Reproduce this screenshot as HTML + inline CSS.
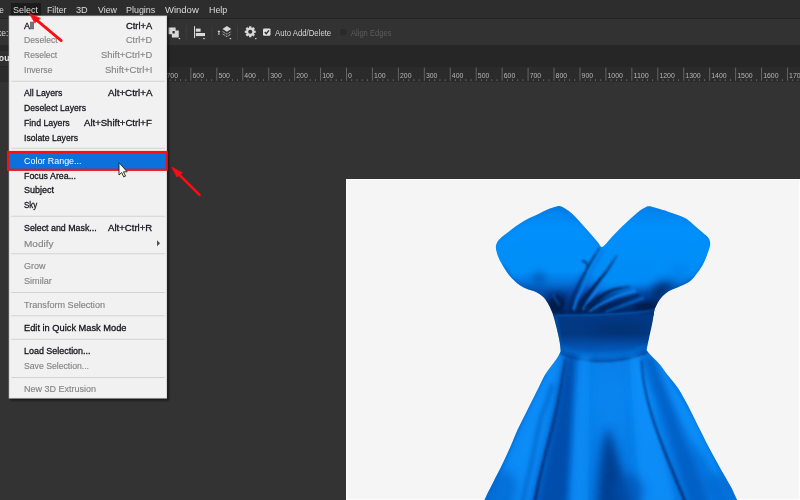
<!DOCTYPE html>
<html><head><meta charset="utf-8"><title>Select menu</title>
<style>
html,body{margin:0;padding:0;}
body{width:800px;height:500px;overflow:hidden;position:relative;background:#333333;font-family:"Liberation Sans",sans-serif;font-size:9px;}
.t{position:absolute;white-space:nowrap;line-height:12px;height:12px;font-size:9.5px;transform-origin:0 50%;}
.en{color:#14141a;-webkit-text-stroke:0.3px #14141a;}
.dis{color:#858585;-webkit-text-stroke:0.15px #858585;}
.hl{color:#ffffff;}
.mb{color:#dcdcdc;}
.tb{color:#d6d6d6;}
.tbd{color:#5c5c5c;}
#menubar{position:absolute;left:0;top:0;width:800px;height:18px;background:#2d2d2d;}
#mbline{position:absolute;left:0;top:18px;width:800px;height:1px;background:#232323;}
#optbar{position:absolute;left:0;top:19px;width:800px;height:26px;background:#323232;}
#tabbar{position:absolute;left:0;top:45px;width:800px;height:22px;background:#262626;}
#ruler{position:absolute;left:0;top:67px;width:800px;height:15px;background:#2b2b2b;}
#tab{position:absolute;left:0;top:50.5px;width:120px;height:15.5px;background:#303030;}
#selbtn{position:absolute;left:10.6px;top:2.5px;width:30px;height:13.5px;background:#1b1b1b;}
#canvas{position:absolute;left:346px;top:179px;width:454px;height:321px;background:#f5f5f5;box-shadow:0 0 1px 0.5px rgba(0,0,0,0.35), inset 0 0 0 1px #fdfdfd;}
</style></head><body>
<div id="menubar"></div><div id="mbline"></div><div id="optbar"></div><div id="tabbar"></div><div id="ruler"></div><div id="tab"></div><div id="selbtn"></div>

<div id="chrome">
<span class="t mb" style="left:-14.50px;top:3.61px;transform:scaleX(0.8734)">Type</span>
<span class="t mb" style="left:13.00px;top:3.61px;transform:scaleX(0.9467)">Select</span>
<span class="t mb" style="left:47.00px;top:3.61px;transform:scaleX(0.9231)">Filter</span>
<span class="t mb" style="left:76.25px;top:3.61px;transform:scaleX(0.9666)">3D</span>
<span class="t mb" style="left:97.50px;top:3.61px;transform:scaleX(0.9304)">View</span>
<span class="t mb" style="left:126.25px;top:3.61px;transform:scaleX(0.9383)">Plugins</span>
<span class="t mb" style="left:165.00px;top:3.61px;transform:scaleX(0.9986)">Window</span>
<span class="t mb" style="left:208.75px;top:3.61px;transform:scaleX(0.9337)">Help</span>
<span class="t tb" style="left:-19.00px;top:26.60px;font-size:8.6px;transform:scaleX(1.0089)">Stroke:</span>
<span class="t tb" style="left:274.50px;top:26.60px;font-size:8.6px;transform:scaleX(0.9048)">Auto Add/Delete</span>
<span class="t tbd" style="left:350.60px;top:26.60px;font-size:8.6px;transform:scaleX(0.8802)">Align Edges</span>
<svg id="chromesvg" width="800" height="90" viewBox="0 0 800 90" style="position:absolute;left:0;top:0;overflow:visible">
<rect x="185.75" y="25.5" width="1" height="15" fill="#3d3d3d"/>
<rect x="211.4" y="25.5" width="1" height="15" fill="#3d3d3d"/>
<rect x="237.0" y="25.5" width="1" height="15" fill="#3d3d3d"/>
<path fill="#d9d9d9" fill-rule="evenodd" d="M168.5 27.4h7.1v3.1h3.15v6.9h-6.85v-3.15h-3.4z M172.5 31.1h2.25v2.5h-2.25z"/>
<path fill="#d9d9d9" d="M178.3 38h2.2l-1.1 1.4z"/>
<rect x="194" y="26.1" width="1" height="12" fill="#d9d9d9"/>
<rect x="195.8" y="28.6" width="4.8" height="3.1" fill="#d9d9d9"/>
<rect x="195.8" y="33" width="9.2" height="3.1" fill="#d9d9d9"/>
<path fill="#d9d9d9" d="M202.9 38h2.2l-1.1 1.4z"/>
<path fill="#d9d9d9" d="M218.9 30.3l1.5 1.8h-1v2.8h-1v-2.8h-1z"/>
<path fill="#d9d9d9" d="M226.9 26l4.4 2.9l-4.4 2.9l-4.4-2.9z"/>
<path fill="none" stroke="#d9d9d9" stroke-width="0.9" d="M222.7 31.6l4.2 2.6l4.2-2.6 M222.7 34l4.2 2.6l4.2-2.6" stroke-dasharray="1.2 0.7"/>
<path fill="#d9d9d9" d="M229.3 38h2.2l-1.1 1.4z"/>
<path fill="#d9d9d9" fill-rule="evenodd" d="M255.74 30.64 L255.74 32.86 L254.14 33.04 L253.91 33.59 L254.92 34.84 L253.34 36.42 L252.09 35.41 L251.54 35.64 L251.36 37.24 L249.14 37.24 L248.96 35.64 L248.41 35.41 L247.16 36.42 L245.58 34.84 L246.59 33.59 L246.36 33.04 L244.76 32.86 L244.76 30.64 L246.36 30.46 L246.59 29.91 L245.58 28.66 L247.16 27.08 L248.41 28.09 L248.96 27.86 L249.14 26.26 L251.36 26.26 L251.54 27.86 L252.09 28.09 L253.34 27.08 L254.92 28.66 L253.91 29.91 L254.14 30.46Z M248.15 31.75a2.1 2.1 0 1 0 4.2 0a2.1 2.1 0 1 0 -4.2 0z"/>
<path fill="#d9d9d9" d="M254.7 38h2.2l-1.1 1.4z"/>
<rect x="263" y="28.4" width="7.5" height="7.4" rx="1.2" fill="#dedede"/>
<path fill="none" stroke="#2a2a2a" stroke-width="1.3" d="M264.7 32l1.6 1.7l2.7-3.4"/>
<rect x="340.4" y="28.9" width="6" height="6.4" rx="1" fill="#292929"/>
<rect x="138.48" y="67.7" width="1" height="13" fill="#646464"/>
<rect x="143.77" y="79.2" width="0.9" height="1.8" fill="#686868"/>
<rect x="148.96" y="79.2" width="0.9" height="1.8" fill="#686868"/>
<rect x="154.14" y="79.2" width="0.9" height="1.8" fill="#686868"/>
<rect x="159.33" y="79.2" width="0.9" height="1.8" fill="#686868"/>
<text x="140.58" y="78" font-size="8" fill="#b8b8b8" opacity="0.99" textLength="11.55" lengthAdjust="spacingAndGlyphs" font-family="Liberation Sans, sans-serif">800</text>
<rect x="164.42" y="67.7" width="1" height="13" fill="#646464"/>
<rect x="169.71" y="79.2" width="0.9" height="1.8" fill="#686868"/>
<rect x="174.90" y="79.2" width="0.9" height="1.8" fill="#686868"/>
<rect x="180.08" y="79.2" width="0.9" height="1.8" fill="#686868"/>
<rect x="185.27" y="79.2" width="0.9" height="1.8" fill="#686868"/>
<text x="166.52" y="78" font-size="8" fill="#b8b8b8" opacity="0.99" textLength="11.55" lengthAdjust="spacingAndGlyphs" font-family="Liberation Sans, sans-serif">700</text>
<rect x="190.36" y="67.7" width="1" height="13" fill="#646464"/>
<rect x="195.65" y="79.2" width="0.9" height="1.8" fill="#686868"/>
<rect x="200.84" y="79.2" width="0.9" height="1.8" fill="#686868"/>
<rect x="206.02" y="79.2" width="0.9" height="1.8" fill="#686868"/>
<rect x="211.21" y="79.2" width="0.9" height="1.8" fill="#686868"/>
<text x="192.46" y="78" font-size="8" fill="#b8b8b8" opacity="0.99" textLength="11.55" lengthAdjust="spacingAndGlyphs" font-family="Liberation Sans, sans-serif">600</text>
<rect x="216.30" y="67.7" width="1" height="13" fill="#646464"/>
<rect x="221.59" y="79.2" width="0.9" height="1.8" fill="#686868"/>
<rect x="226.78" y="79.2" width="0.9" height="1.8" fill="#686868"/>
<rect x="231.96" y="79.2" width="0.9" height="1.8" fill="#686868"/>
<rect x="237.15" y="79.2" width="0.9" height="1.8" fill="#686868"/>
<text x="218.40" y="78" font-size="8" fill="#b8b8b8" opacity="0.99" textLength="11.55" lengthAdjust="spacingAndGlyphs" font-family="Liberation Sans, sans-serif">500</text>
<rect x="242.24" y="67.7" width="1" height="13" fill="#646464"/>
<rect x="247.53" y="79.2" width="0.9" height="1.8" fill="#686868"/>
<rect x="252.72" y="79.2" width="0.9" height="1.8" fill="#686868"/>
<rect x="257.90" y="79.2" width="0.9" height="1.8" fill="#686868"/>
<rect x="263.09" y="79.2" width="0.9" height="1.8" fill="#686868"/>
<text x="244.34" y="78" font-size="8" fill="#b8b8b8" opacity="0.99" textLength="11.55" lengthAdjust="spacingAndGlyphs" font-family="Liberation Sans, sans-serif">400</text>
<rect x="268.18" y="67.7" width="1" height="13" fill="#646464"/>
<rect x="273.47" y="79.2" width="0.9" height="1.8" fill="#686868"/>
<rect x="278.66" y="79.2" width="0.9" height="1.8" fill="#686868"/>
<rect x="283.84" y="79.2" width="0.9" height="1.8" fill="#686868"/>
<rect x="289.03" y="79.2" width="0.9" height="1.8" fill="#686868"/>
<text x="270.28" y="78" font-size="8" fill="#b8b8b8" opacity="0.99" textLength="11.55" lengthAdjust="spacingAndGlyphs" font-family="Liberation Sans, sans-serif">300</text>
<rect x="294.12" y="67.7" width="1" height="13" fill="#646464"/>
<rect x="299.41" y="79.2" width="0.9" height="1.8" fill="#686868"/>
<rect x="304.60" y="79.2" width="0.9" height="1.8" fill="#686868"/>
<rect x="309.78" y="79.2" width="0.9" height="1.8" fill="#686868"/>
<rect x="314.97" y="79.2" width="0.9" height="1.8" fill="#686868"/>
<text x="296.22" y="78" font-size="8" fill="#b8b8b8" opacity="0.99" textLength="11.55" lengthAdjust="spacingAndGlyphs" font-family="Liberation Sans, sans-serif">200</text>
<rect x="320.06" y="67.7" width="1" height="13" fill="#646464"/>
<rect x="325.35" y="79.2" width="0.9" height="1.8" fill="#686868"/>
<rect x="330.54" y="79.2" width="0.9" height="1.8" fill="#686868"/>
<rect x="335.72" y="79.2" width="0.9" height="1.8" fill="#686868"/>
<rect x="340.91" y="79.2" width="0.9" height="1.8" fill="#686868"/>
<text x="322.16" y="78" font-size="8" fill="#b8b8b8" opacity="0.99" textLength="11.55" lengthAdjust="spacingAndGlyphs" font-family="Liberation Sans, sans-serif">100</text>
<rect x="346.00" y="67.7" width="1" height="13" fill="#646464"/>
<rect x="351.29" y="79.2" width="0.9" height="1.8" fill="#686868"/>
<rect x="356.48" y="79.2" width="0.9" height="1.8" fill="#686868"/>
<rect x="361.66" y="79.2" width="0.9" height="1.8" fill="#686868"/>
<rect x="366.85" y="79.2" width="0.9" height="1.8" fill="#686868"/>
<text x="348.10" y="78" font-size="8" fill="#b8b8b8" opacity="0.99" textLength="3.85" lengthAdjust="spacingAndGlyphs" font-family="Liberation Sans, sans-serif">0</text>
<rect x="371.94" y="67.7" width="1" height="13" fill="#646464"/>
<rect x="377.23" y="79.2" width="0.9" height="1.8" fill="#686868"/>
<rect x="382.42" y="79.2" width="0.9" height="1.8" fill="#686868"/>
<rect x="387.60" y="79.2" width="0.9" height="1.8" fill="#686868"/>
<rect x="392.79" y="79.2" width="0.9" height="1.8" fill="#686868"/>
<text x="374.04" y="78" font-size="8" fill="#b8b8b8" opacity="0.99" textLength="11.55" lengthAdjust="spacingAndGlyphs" font-family="Liberation Sans, sans-serif">100</text>
<rect x="397.88" y="67.7" width="1" height="13" fill="#646464"/>
<rect x="403.17" y="79.2" width="0.9" height="1.8" fill="#686868"/>
<rect x="408.36" y="79.2" width="0.9" height="1.8" fill="#686868"/>
<rect x="413.54" y="79.2" width="0.9" height="1.8" fill="#686868"/>
<rect x="418.73" y="79.2" width="0.9" height="1.8" fill="#686868"/>
<text x="399.98" y="78" font-size="8" fill="#b8b8b8" opacity="0.99" textLength="11.55" lengthAdjust="spacingAndGlyphs" font-family="Liberation Sans, sans-serif">200</text>
<rect x="423.82" y="67.7" width="1" height="13" fill="#646464"/>
<rect x="429.11" y="79.2" width="0.9" height="1.8" fill="#686868"/>
<rect x="434.30" y="79.2" width="0.9" height="1.8" fill="#686868"/>
<rect x="439.48" y="79.2" width="0.9" height="1.8" fill="#686868"/>
<rect x="444.67" y="79.2" width="0.9" height="1.8" fill="#686868"/>
<text x="425.92" y="78" font-size="8" fill="#b8b8b8" opacity="0.99" textLength="11.55" lengthAdjust="spacingAndGlyphs" font-family="Liberation Sans, sans-serif">300</text>
<rect x="449.76" y="67.7" width="1" height="13" fill="#646464"/>
<rect x="455.05" y="79.2" width="0.9" height="1.8" fill="#686868"/>
<rect x="460.24" y="79.2" width="0.9" height="1.8" fill="#686868"/>
<rect x="465.42" y="79.2" width="0.9" height="1.8" fill="#686868"/>
<rect x="470.61" y="79.2" width="0.9" height="1.8" fill="#686868"/>
<text x="451.86" y="78" font-size="8" fill="#b8b8b8" opacity="0.99" textLength="11.55" lengthAdjust="spacingAndGlyphs" font-family="Liberation Sans, sans-serif">400</text>
<rect x="475.70" y="67.7" width="1" height="13" fill="#646464"/>
<rect x="480.99" y="79.2" width="0.9" height="1.8" fill="#686868"/>
<rect x="486.18" y="79.2" width="0.9" height="1.8" fill="#686868"/>
<rect x="491.36" y="79.2" width="0.9" height="1.8" fill="#686868"/>
<rect x="496.55" y="79.2" width="0.9" height="1.8" fill="#686868"/>
<text x="477.80" y="78" font-size="8" fill="#b8b8b8" opacity="0.99" textLength="11.55" lengthAdjust="spacingAndGlyphs" font-family="Liberation Sans, sans-serif">500</text>
<rect x="501.64" y="67.7" width="1" height="13" fill="#646464"/>
<rect x="506.93" y="79.2" width="0.9" height="1.8" fill="#686868"/>
<rect x="512.12" y="79.2" width="0.9" height="1.8" fill="#686868"/>
<rect x="517.30" y="79.2" width="0.9" height="1.8" fill="#686868"/>
<rect x="522.49" y="79.2" width="0.9" height="1.8" fill="#686868"/>
<text x="503.74" y="78" font-size="8" fill="#b8b8b8" opacity="0.99" textLength="11.55" lengthAdjust="spacingAndGlyphs" font-family="Liberation Sans, sans-serif">600</text>
<rect x="527.58" y="67.7" width="1" height="13" fill="#646464"/>
<rect x="532.87" y="79.2" width="0.9" height="1.8" fill="#686868"/>
<rect x="538.06" y="79.2" width="0.9" height="1.8" fill="#686868"/>
<rect x="543.24" y="79.2" width="0.9" height="1.8" fill="#686868"/>
<rect x="548.43" y="79.2" width="0.9" height="1.8" fill="#686868"/>
<text x="529.68" y="78" font-size="8" fill="#b8b8b8" opacity="0.99" textLength="11.55" lengthAdjust="spacingAndGlyphs" font-family="Liberation Sans, sans-serif">700</text>
<rect x="553.52" y="67.7" width="1" height="13" fill="#646464"/>
<rect x="558.81" y="79.2" width="0.9" height="1.8" fill="#686868"/>
<rect x="564.00" y="79.2" width="0.9" height="1.8" fill="#686868"/>
<rect x="569.18" y="79.2" width="0.9" height="1.8" fill="#686868"/>
<rect x="574.37" y="79.2" width="0.9" height="1.8" fill="#686868"/>
<text x="555.62" y="78" font-size="8" fill="#b8b8b8" opacity="0.99" textLength="11.55" lengthAdjust="spacingAndGlyphs" font-family="Liberation Sans, sans-serif">800</text>
<rect x="579.46" y="67.7" width="1" height="13" fill="#646464"/>
<rect x="584.75" y="79.2" width="0.9" height="1.8" fill="#686868"/>
<rect x="589.94" y="79.2" width="0.9" height="1.8" fill="#686868"/>
<rect x="595.12" y="79.2" width="0.9" height="1.8" fill="#686868"/>
<rect x="600.31" y="79.2" width="0.9" height="1.8" fill="#686868"/>
<text x="581.56" y="78" font-size="8" fill="#b8b8b8" opacity="0.99" textLength="11.55" lengthAdjust="spacingAndGlyphs" font-family="Liberation Sans, sans-serif">900</text>
<rect x="605.40" y="67.7" width="1" height="13" fill="#646464"/>
<rect x="610.69" y="79.2" width="0.9" height="1.8" fill="#686868"/>
<rect x="615.88" y="79.2" width="0.9" height="1.8" fill="#686868"/>
<rect x="621.06" y="79.2" width="0.9" height="1.8" fill="#686868"/>
<rect x="626.25" y="79.2" width="0.9" height="1.8" fill="#686868"/>
<text x="607.50" y="78" font-size="8" fill="#b8b8b8" opacity="0.99" textLength="15.40" lengthAdjust="spacingAndGlyphs" font-family="Liberation Sans, sans-serif">1000</text>
<rect x="631.34" y="67.7" width="1" height="13" fill="#646464"/>
<rect x="636.63" y="79.2" width="0.9" height="1.8" fill="#686868"/>
<rect x="641.82" y="79.2" width="0.9" height="1.8" fill="#686868"/>
<rect x="647.00" y="79.2" width="0.9" height="1.8" fill="#686868"/>
<rect x="652.19" y="79.2" width="0.9" height="1.8" fill="#686868"/>
<text x="633.44" y="78" font-size="8" fill="#b8b8b8" opacity="0.99" textLength="15.40" lengthAdjust="spacingAndGlyphs" font-family="Liberation Sans, sans-serif">1100</text>
<rect x="657.28" y="67.7" width="1" height="13" fill="#646464"/>
<rect x="662.57" y="79.2" width="0.9" height="1.8" fill="#686868"/>
<rect x="667.76" y="79.2" width="0.9" height="1.8" fill="#686868"/>
<rect x="672.94" y="79.2" width="0.9" height="1.8" fill="#686868"/>
<rect x="678.13" y="79.2" width="0.9" height="1.8" fill="#686868"/>
<text x="659.38" y="78" font-size="8" fill="#b8b8b8" opacity="0.99" textLength="15.40" lengthAdjust="spacingAndGlyphs" font-family="Liberation Sans, sans-serif">1200</text>
<rect x="683.22" y="67.7" width="1" height="13" fill="#646464"/>
<rect x="688.51" y="79.2" width="0.9" height="1.8" fill="#686868"/>
<rect x="693.70" y="79.2" width="0.9" height="1.8" fill="#686868"/>
<rect x="698.88" y="79.2" width="0.9" height="1.8" fill="#686868"/>
<rect x="704.07" y="79.2" width="0.9" height="1.8" fill="#686868"/>
<text x="685.32" y="78" font-size="8" fill="#b8b8b8" opacity="0.99" textLength="15.40" lengthAdjust="spacingAndGlyphs" font-family="Liberation Sans, sans-serif">1300</text>
<rect x="709.16" y="67.7" width="1" height="13" fill="#646464"/>
<rect x="714.45" y="79.2" width="0.9" height="1.8" fill="#686868"/>
<rect x="719.64" y="79.2" width="0.9" height="1.8" fill="#686868"/>
<rect x="724.82" y="79.2" width="0.9" height="1.8" fill="#686868"/>
<rect x="730.01" y="79.2" width="0.9" height="1.8" fill="#686868"/>
<text x="711.26" y="78" font-size="8" fill="#b8b8b8" opacity="0.99" textLength="15.40" lengthAdjust="spacingAndGlyphs" font-family="Liberation Sans, sans-serif">1400</text>
<rect x="735.10" y="67.7" width="1" height="13" fill="#646464"/>
<rect x="740.39" y="79.2" width="0.9" height="1.8" fill="#686868"/>
<rect x="745.58" y="79.2" width="0.9" height="1.8" fill="#686868"/>
<rect x="750.76" y="79.2" width="0.9" height="1.8" fill="#686868"/>
<rect x="755.95" y="79.2" width="0.9" height="1.8" fill="#686868"/>
<text x="737.20" y="78" font-size="8" fill="#b8b8b8" opacity="0.99" textLength="15.40" lengthAdjust="spacingAndGlyphs" font-family="Liberation Sans, sans-serif">1500</text>
<rect x="761.04" y="67.7" width="1" height="13" fill="#646464"/>
<rect x="766.33" y="79.2" width="0.9" height="1.8" fill="#686868"/>
<rect x="771.52" y="79.2" width="0.9" height="1.8" fill="#686868"/>
<rect x="776.70" y="79.2" width="0.9" height="1.8" fill="#686868"/>
<rect x="781.89" y="79.2" width="0.9" height="1.8" fill="#686868"/>
<text x="763.14" y="78" font-size="8" fill="#b8b8b8" opacity="0.99" textLength="15.40" lengthAdjust="spacingAndGlyphs" font-family="Liberation Sans, sans-serif">1600</text>
<rect x="786.98" y="67.7" width="1" height="13" fill="#646464"/>
<rect x="792.27" y="79.2" width="0.9" height="1.8" fill="#686868"/>
<rect x="797.46" y="79.2" width="0.9" height="1.8" fill="#686868"/>
<rect x="802.64" y="79.2" width="0.9" height="1.8" fill="#686868"/>
<rect x="807.83" y="79.2" width="0.9" height="1.8" fill="#686868"/>
<text x="789.08" y="78" font-size="8" fill="#b8b8b8" opacity="0.99" textLength="15.40" lengthAdjust="spacingAndGlyphs" font-family="Liberation Sans, sans-serif">1700</text>
<rect x="812.92" y="67.7" width="1" height="13" fill="#646464"/>
<rect x="818.21" y="79.2" width="0.9" height="1.8" fill="#686868"/>
<rect x="823.40" y="79.2" width="0.9" height="1.8" fill="#686868"/>
<rect x="828.58" y="79.2" width="0.9" height="1.8" fill="#686868"/>
<rect x="833.77" y="79.2" width="0.9" height="1.8" fill="#686868"/>
<text x="815.02" y="78" font-size="8" fill="#b8b8b8" opacity="0.99" textLength="15.40" lengthAdjust="spacingAndGlyphs" font-family="Liberation Sans, sans-serif">1800</text>
</svg>
<span class="t" style="left:-6.5px;top:51.6px;color:#e8e8e8;font-weight:bold;font-size:9px;transform:scaleX(0.97)">you</span>
</div>
<div id="canvas"></div>
<svg id="dress" width="800" height="500" viewBox="0 0 800 500" style="position:absolute;left:0;top:0">
<defs>
<clipPath id="sil"><path d="M558.2 206C556.8 206.4 553.1 207.4 550.0 208.6C546.9 209.8 543.0 211.8 539.5 213.4C536.0 215.0 532.2 216.6 529.0 218.3C525.8 220.0 522.8 221.8 520.0 223.5C517.2 225.2 515.0 227.0 512.5 228.8C510.0 230.7 507.2 232.8 505.0 234.6C502.8 236.4 500.5 238.0 499.0 239.8C497.5 241.6 496.4 243.4 496.0 245.5C495.6 247.6 496.0 249.8 496.8 252.5C497.5 255.2 499.1 258.8 500.5 261.5C501.9 264.2 503.4 266.6 505.0 269.0C506.6 271.4 507.9 273.6 510.0 276.0C512.1 278.4 514.8 281.4 517.5 283.5C520.2 285.6 522.9 287.1 526.0 288.5C529.1 289.9 533.0 290.5 536.0 292.0C539.0 293.5 541.6 295.3 543.8 297.5C545.9 299.7 547.4 302.6 548.8 305.0C550.1 307.4 551.3 310.3 552.0 312.0C552.7 313.7 553.0 314.5 553.2 315.0C553.8 317.2 555.7 323.9 556.7 328.2C557.7 332.4 558.7 336.7 559.4 340.5C560.1 344.3 560.6 349.2 560.8 351.0C560.2 352.1 559.2 354.8 557.5 357.5C555.8 360.2 552.7 364.1 550.6 367.0C548.5 369.9 547.0 371.6 545.0 375.0C543.0 378.4 540.8 383.3 538.8 387.5C536.7 391.7 534.8 395.4 532.5 400.0C530.2 404.6 527.5 410.0 525.0 415.0C522.5 420.0 519.8 425.0 517.5 430.0C515.2 435.0 513.6 439.6 511.2 445.0C508.9 450.4 506.0 456.7 503.2 462.5C500.4 468.3 497.1 474.6 494.4 480.0C491.7 485.4 488.9 490.7 486.8 495.0C484.7 499.3 482.6 504.2 481.8 506.0L740.6 506C740.0 505.0 738.6 503.1 737.0 500.0C735.4 496.9 733.4 491.7 731.2 487.5C729.0 483.3 726.6 479.6 724.0 475.0C721.4 470.4 718.4 465.0 715.6 460.0C712.9 455.0 710.1 450.0 707.5 445.0C704.9 440.0 702.3 434.6 700.0 430.0C697.7 425.4 696.0 422.1 693.8 417.5C691.5 412.9 689.0 407.5 686.2 402.5C683.5 397.5 680.6 392.1 677.5 387.5C674.4 382.9 670.5 378.8 667.5 375.0C664.5 371.2 662.5 367.8 659.7 364.5C657.0 361.2 653.2 357.9 651.0 355.5C648.8 353.1 647.2 351.1 646.5 350.2C646.6 349.5 646.8 348.6 647.4 345.8C648.0 343.0 649.1 337.6 650.0 333.5C650.9 329.4 652.0 325.0 652.7 321.0C653.4 317.0 654.1 311.6 654.4 309.7C655.1 308.2 657.2 303.4 658.8 301.0C660.3 298.6 661.9 296.8 663.8 295.0C665.6 293.2 667.3 292.0 670.0 290.5C672.7 289.0 676.7 287.8 680.0 286.2C683.3 284.7 687.1 283.5 690.0 281.2C692.9 279.0 695.2 275.6 697.5 272.5C699.8 269.4 701.9 266.2 703.8 262.5C705.6 258.8 707.7 253.1 708.8 250.0C709.8 246.9 710.2 246.0 710.2 244.0C710.2 242.0 709.9 240.0 708.5 238.0C707.1 236.0 704.6 234.3 702.0 232.0C699.4 229.7 696.0 226.6 693.0 224.2C690.0 221.8 688.2 219.7 684.0 217.6C679.8 215.5 673.1 213.3 667.5 211.4C661.9 209.5 653.3 207.2 650.5 206.3C649.8 206.4 648.2 206.0 646.0 207.0C643.8 208.0 641.0 209.7 637.5 212.5C634.0 215.3 629.2 219.8 625.0 223.8C620.8 227.7 616.2 232.4 612.5 236.2C608.8 240.1 604.9 245.8 602.5 246.8C600.1 247.8 600.2 245.0 598.0 242.5C595.8 240.0 592.0 235.4 589.0 232.0C586.0 228.6 583.0 225.2 580.0 222.0C577.0 218.8 574.0 215.3 571.0 212.8C568.0 210.2 564.1 207.9 562.0 206.8C559.9 205.6 558.8 206.1 558.2 206.0Z"/></clipPath>
<filter id="b1" x="-50%" y="-50%" width="200%" height="200%"><feGaussianBlur stdDeviation="1"/></filter>
<filter id="b2" x="-50%" y="-50%" width="200%" height="200%"><feGaussianBlur stdDeviation="2"/></filter>
<filter id="b3" x="-50%" y="-50%" width="200%" height="200%"><feGaussianBlur stdDeviation="3.5"/></filter>
<filter id="b5" x="-50%" y="-50%" width="200%" height="200%"><feGaussianBlur stdDeviation="5"/></filter>
<filter id="b8" x="-50%" y="-50%" width="200%" height="200%"><feGaussianBlur stdDeviation="8"/></filter>
<linearGradient id="gwb" x1="0" y1="313" x2="0" y2="360" gradientUnits="userSpaceOnUse"><stop offset="0" stop-color="#033a86"/><stop offset="0.45" stop-color="#033882"/><stop offset="0.72" stop-color="#0452b0"/><stop offset="1" stop-color="#0668cc"/></linearGradient>
<linearGradient id="gbod" x1="0" y1="206" x2="0" y2="315" gradientUnits="userSpaceOnUse"><stop offset="0" stop-color="#0480ea"/><stop offset="0.2" stop-color="#0090fc"/><stop offset="0.6" stop-color="#008ef8"/><stop offset="0.7" stop-color="#0474dc"/><stop offset="0.8" stop-color="#0348a2"/><stop offset="0.9" stop-color="#022e70"/><stop offset="1" stop-color="#012258"/></linearGradient>
<linearGradient id="gsk" x1="0" y1="355" x2="0" y2="500" gradientUnits="userSpaceOnUse"><stop offset="0" stop-color="#087ce6"/><stop offset="0.3" stop-color="#0882ee"/><stop offset="1" stop-color="#0676e0"/></linearGradient>
</defs>
<g clip-path="url(#sil)">
<rect x="480" y="200" width="260" height="116" fill="url(#gbod)"/>
<rect x="470" y="350" width="290" height="160" fill="url(#gsk)"/>
<path d="M547.2 315L553.2 315C556.8 314.9 566.9 314.8 575.0 314.6C583.1 314.4 592.4 314.4 601.6 314.0C610.8 313.6 621.2 313.0 630.0 312.3C638.8 311.6 650.3 310.1 654.4 309.7L660.4 309.7L654.5 350.2L646.5 350.2C643.4 351.2 635.5 354.8 628.0 356.3C620.5 357.8 610.4 359.0 601.6 359.0C592.8 359.0 582.0 357.6 575.2 356.3C568.4 355.0 563.2 351.9 560.8 351.0L552.8 351Z" fill="url(#gwb)"/>
<ellipse cx="509" cy="263" rx="13" ry="15" fill="#008ef8" opacity="1" filter="url(#b5)" transform="rotate(0 509 263)"/>
<ellipse cx="697" cy="261" rx="12" ry="15" fill="#008ef8" opacity="1" filter="url(#b5)" transform="rotate(0 697 261)"/>
<ellipse cx="680" cy="272" rx="10" ry="8" fill="#0482ec" opacity="0.8" filter="url(#b5)" transform="rotate(0 680 272)"/>
<path d="M498.0 240.0C501.7 237.0 512.2 227.1 520.0 222.0C527.8 216.9 538.7 212.2 545.0 209.5C551.3 206.8 555.8 206.2 558.0 205.5" fill="none" stroke="#0568cc" stroke-width="3" stroke-linecap="round" opacity="0.35" filter="url(#b2)"/>
<path d="M652.0 205.5C655.8 206.5 667.3 208.2 675.0 211.5C682.7 214.8 692.2 220.1 698.0 225.0C703.8 229.9 708.0 238.3 710.0 241.0" fill="none" stroke="#0570d4" stroke-width="3" stroke-linecap="round" opacity="0.3" filter="url(#b2)"/>
<path d="M560.0 207.0C563.3 209.7 573.3 216.8 580.0 223.0C586.7 229.2 596.7 240.5 600.0 244.0" fill="none" stroke="#0568cc" stroke-width="3" stroke-linecap="round" opacity="0.35" filter="url(#b2)"/>
<path d="M503.0 268.0C504.8 270.3 509.5 278.2 514.0 282.0C518.5 285.8 524.8 287.8 530.0 290.5C535.2 293.2 542.5 296.8 545.0 298.0" fill="none" stroke="#0458b8" stroke-width="4" stroke-linecap="round" opacity="0.7" filter="url(#b2)"/>
<path d="M706.0 264.0C704.2 266.5 699.8 274.9 695.0 279.0C690.2 283.1 682.5 285.5 677.0 288.5C671.5 291.5 664.5 295.6 662.0 297.0" fill="none" stroke="#0458b8" stroke-width="4" stroke-linecap="round" opacity="0.6" filter="url(#b2)"/>
<path d="M652.0 284.0L674.0 282.0L668.0 291.0L660.0 299.0L654.0 310.0Z" fill="#022a66" opacity="0.8" filter="url(#b3)"/>
<ellipse cx="539" cy="279" rx="7" ry="8" fill="#0450a8" opacity="0.55" filter="url(#b3)" transform="rotate(0 539 279)"/>
<ellipse cx="557" cy="303" rx="8" ry="9" fill="#011640" opacity="0.9" filter="url(#b3)" transform="rotate(0 557 303)"/>
<path d="M553.0 294.5C553.5 295.4 555.0 298.2 556.0 300.0C557.0 301.8 558.5 304.2 559.0 305.0" fill="none" stroke="#0660c8" stroke-width="1.6" stroke-linecap="round" opacity="0.8" filter="url(#b1)"/>
<path d="M592.0 260.0L656.0 260.0L656.0 283.0L628.0 288.0L610.0 289.0L598.0 294.0Z" fill="#008cf6" opacity="1" filter="url(#b5)"/>
<path d="M599.6 281.2C598.1 283.4 592.6 291.5 590.4 294.8C588.2 298.1 587.6 298.8 586.2 301.1C584.8 303.5 582.8 307.7 582.1 309.0L583.9 310.0C584.7 308.8 587.2 305.0 588.8 302.9C590.4 300.7 591.0 300.2 593.6 297.2C596.2 294.2 602.6 286.9 604.4 284.8Z" fill="#0a7ce8" opacity="0.95" filter="url(#b1)"/>
<path d="M635.4 288.6C632.3 289.6 623.0 292.0 616.9 294.5C610.8 297.1 603.7 301.3 598.9 304.0C594.2 306.7 590.3 309.6 588.5 310.7L589.5 312.3C591.2 311.2 595.3 308.5 600.1 306.0C604.8 303.6 612.0 299.7 618.1 297.5C624.2 295.2 633.5 293.3 636.6 292.4Z" fill="#0a7ce8" opacity="0.95" filter="url(#b1)"/>
<path d="M643.5 296.5C639.1 298.2 623.6 304.0 617.1 306.5C610.7 309.0 606.8 310.5 604.7 311.2L605.3 312.8C607.4 312.0 611.3 310.7 617.9 308.5C624.4 306.3 640.1 301.0 644.5 299.5Z" fill="#0668d0" opacity="0.9" filter="url(#b1)"/>
<path d="M616.7 254.8C615.0 257.3 610.0 265.0 606.2 269.9C602.3 274.8 597.5 279.8 593.6 284.4C589.6 289.0 585.7 293.5 582.5 297.5C579.3 301.5 575.9 306.5 574.5 308.3L579.5 311.7C580.6 309.8 583.7 304.6 586.5 300.5C589.3 296.3 592.9 291.5 596.4 286.6C600.0 281.7 604.4 276.3 607.8 271.1C611.3 265.9 615.7 257.8 617.3 255.2Z" fill="#012052" opacity="0.92" filter="url(#b1)"/>
<path d="M629.9 285.9C627.0 286.4 617.8 287.1 612.5 288.7C607.3 290.4 603.1 292.8 598.3 295.8C593.6 298.9 586.5 305.0 584.2 306.9L587.8 311.1C590.0 309.1 596.4 302.5 600.7 299.2C604.9 295.8 608.6 293.3 613.5 291.3C618.4 289.3 627.3 287.8 630.1 287.1Z" fill="#012052" opacity="0.92" filter="url(#b1)"/>
<path d="M638.7 293.7C634.8 295.0 622.1 298.8 615.4 301.2C608.7 303.6 601.4 306.9 598.6 308.0L600.4 312.0C603.1 310.7 610.1 307.0 616.6 304.2C623.1 301.4 635.5 296.7 639.3 295.3Z" fill="#012052" opacity="0.9" filter="url(#b1)"/>
<ellipse cx="646" cy="307" rx="11" ry="5" fill="#011a48" opacity="0.85" filter="url(#b2)" transform="rotate(0 646 307)"/>
<path d="M602.5 249.4C601.2 251.5 597.3 257.6 594.9 261.9C592.4 266.1 590.1 270.6 587.8 274.9C585.5 279.1 583.2 283.4 581.2 287.3C579.2 291.3 577.1 294.7 575.6 298.4C574.0 302.1 572.6 307.7 572.0 309.5L575.0 310.5C575.6 308.7 577.0 303.2 578.4 299.6C579.9 295.9 581.8 292.6 583.8 288.7C585.8 284.8 588.0 280.4 590.2 276.1C592.4 271.9 594.7 267.4 597.1 263.1C599.5 258.9 603.3 252.7 604.5 250.6Z" fill="#0a78e4" opacity="0.9" filter="url(#b1)"/>
<path d="M599.0 247.7C597.7 249.7 593.9 255.4 591.3 259.6C588.7 263.8 585.9 268.8 583.6 273.0C581.3 277.2 579.5 281.0 577.4 285.0C575.3 288.9 572.9 292.9 571.2 297.0C569.5 301.1 567.8 307.4 567.2 309.5L570.2 310.5C570.8 308.4 572.3 302.1 573.8 298.0C575.4 294.0 577.7 290.1 579.6 286.0C581.5 282.0 583.2 278.3 585.4 274.0C587.6 269.7 590.3 264.7 592.7 260.4C595.1 256.1 598.8 250.3 600.0 248.3Z" fill="#012052" opacity="0.95" filter="url(#b1)"/>
<path d="M582.0 274.5C581.0 276.5 578.0 282.5 576.0 286.5C574.0 290.5 571.6 294.4 570.0 298.5C568.4 302.6 566.8 308.9 566.2 311.0" fill="none" stroke="#044cac" stroke-width="3" stroke-linecap="round" opacity="0.6" filter="url(#b2)"/>
<path d="M582.5 261.0C583.1 261.2 585.2 261.7 586.0 262.5C586.8 263.3 587.2 265.4 587.5 266.0" fill="none" stroke="#012052" stroke-width="1.6" stroke-linecap="round" opacity="0.9" filter="url(#b1)"/>
<path d="M553.2 315.4C556.8 315.3 566.9 315.2 575.0 315.0C583.1 314.8 592.4 314.8 601.6 314.4C610.8 314.0 621.2 313.4 630.0 312.7C638.8 312.0 650.3 310.5 654.4 310.1" fill="none" stroke="#0668d0" stroke-width="1.2" stroke-linecap="round" opacity="0.85" filter="url(#b1)"/>
<path d="M646.5 346.7C643.4 347.7 635.5 351.3 628.0 352.8C620.5 354.3 610.4 355.5 601.6 355.5C592.8 355.5 582.0 354.1 575.2 352.8C568.4 351.5 563.2 348.4 560.8 347.5" fill="none" stroke="#0a78e0" stroke-width="3" stroke-linecap="round" opacity="0.7" filter="url(#b2)"/>
<path d="M646.5 352.1C643.4 353.1 635.5 356.7 628.0 358.2C620.5 359.7 610.4 360.9 601.6 360.9C592.8 360.9 582.0 359.5 575.2 358.2C568.4 356.9 563.2 353.8 560.8 352.9" fill="none" stroke="#033c8c" stroke-width="2.6" stroke-linecap="round" opacity="0.95" filter="url(#b1)"/>
<ellipse cx="620" cy="329" rx="28" ry="7" fill="#022a66" opacity="0.4" filter="url(#b5)" transform="rotate(0 620 329)"/>
<path d="M556.0 318.0C556.5 320.7 558.0 328.7 559.0 334.0C560.0 339.3 561.5 347.3 562.0 350.0" fill="none" stroke="#0558b8" stroke-width="2.5" stroke-linecap="round" opacity="0.7" filter="url(#b1)"/>
<path d="M552.0 356.0L563.0 356.0L528.0 506.0L486.0 506.0Z" fill="#0a90fa" opacity="0.8" filter="url(#b5)"/>
<path d="M652.0 356.0L666.0 356.0L748.0 506.0L705.0 506.0Z" fill="#0a90fa" opacity="0.75" filter="url(#b5)"/>
<path d="M552.0 385.0C551.0 388.3 547.9 399.2 546.0 405.0C544.1 410.8 542.7 410.8 540.4 420.0C538.1 429.2 535.1 445.7 532.0 460.0C528.9 474.3 523.2 498.3 521.5 506.0" fill="none" stroke="#0558bc" stroke-width="3.2" stroke-linecap="round" opacity="0.75" filter="url(#b2)"/>
<ellipse cx="500" cy="492" rx="16" ry="22" fill="#0560c8" opacity="0.6" filter="url(#b5)" transform="rotate(20 500 492)"/>
<ellipse cx="722" cy="494" rx="14" ry="22" fill="#0560c8" opacity="0.6" filter="url(#b5)" transform="rotate(-25 722 494)"/>
<ellipse cx="700" cy="470" rx="10" ry="26" fill="#0668d0" opacity="0.5" filter="url(#b5)" transform="rotate(-25 700 470)"/>
<path d="M566.0 356.0L577.0 356.0L568.0 506.0L536.0 506.0Z" fill="#044aa6" opacity="0.9" filter="url(#b3)"/>
<path d="M579.0 356.0L590.0 356.0L588.0 506.0L570.0 506.0Z" fill="#0a8cf6" opacity="0.85" filter="url(#b3)"/>
<path d="M592.0 360.0L628.0 360.0L625.0 440.0L596.0 440.0Z" fill="#0a88f2" opacity="0.4" filter="url(#b8)"/>
<path d="M606.5 430.1C605.7 433.8 603.0 444.3 601.7 452.5C600.3 460.7 599.4 469.3 598.6 479.3C597.9 489.2 597.4 506.7 597.1 512.2L632.9 507.8C631.3 502.6 626.1 486.1 623.4 476.7C620.6 467.3 618.7 459.3 616.3 451.5C614.0 443.7 610.6 433.5 609.5 429.9Z" fill="#033c8e" opacity="0.95" filter="url(#b5)"/>
<path d="M629.0 356.0L641.0 356.0L676.0 506.0L640.0 506.0Z" fill="#0a90fa" opacity="0.85" filter="url(#b3)"/>
<path d="M643.0 356.0L653.0 356.0L712.0 506.0L690.0 506.0Z" fill="#0558bc" opacity="0.75" filter="url(#b3)"/>
<path d="M655.0 386.0C657.5 390.0 664.5 401.0 670.0 410.0C675.5 419.0 682.0 430.0 688.0 440.0C694.0 450.0 700.0 459.0 706.0 470.0C712.0 481.0 721.0 500.0 724.0 506.0" fill="none" stroke="#0668d0" stroke-width="3" stroke-linecap="round" opacity="0.45" filter="url(#b2)"/>
<ellipse cx="628" cy="492" rx="16" ry="18" fill="#0450ac" opacity="0.6" filter="url(#b5)" transform="rotate(0 628 492)"/>
<path d="M564.8 358.9C564.0 363.4 561.9 376.4 560.1 385.8C558.3 395.3 556.3 405.8 553.9 415.8C551.6 425.7 548.8 435.7 546.2 445.7C543.7 455.7 540.9 465.7 538.5 475.7C536.2 485.7 533.4 500.7 532.3 505.7L535.7 506.3C536.6 501.3 539.3 486.3 541.5 476.3C543.6 466.3 546.3 456.3 548.8 446.3C551.2 436.3 553.9 426.3 556.1 416.2C558.2 406.2 560.2 395.7 561.9 386.2C563.6 376.6 565.5 363.6 566.2 359.1Z" fill="#022f78" opacity="0.95" filter="url(#b1)"/>
<path d="M640.8 360.6C641.3 364.8 642.0 376.9 643.7 386.2C645.4 395.4 648.1 406.3 651.0 416.3C654.0 426.3 657.7 436.4 661.4 446.4C665.1 456.5 669.2 466.5 673.2 476.5C677.2 486.6 683.5 501.6 685.5 506.6L688.5 505.4C686.4 500.4 679.9 485.4 675.8 475.5C671.7 465.5 667.4 455.5 663.6 445.6C659.8 435.6 656.0 425.7 653.0 415.7C649.9 405.7 647.1 395.1 645.3 385.8C643.5 376.6 642.7 364.7 642.2 360.4Z" fill="#022f78" opacity="0.9" filter="url(#b1)"/>
<path d="M545.0 375.0C541.7 381.7 531.9 400.4 525.0 415.0C518.1 429.6 510.2 447.8 503.8 462.5C497.2 477.2 489.0 496.2 486.0 503.0" fill="none" stroke="#0668d0" stroke-width="2.5" stroke-linecap="round" opacity="0.5" filter="url(#b1)"/>
<path d="M667.5 375.0C671.9 382.1 685.8 403.3 693.8 417.5C701.7 431.7 707.8 445.8 715.0 460.0C722.2 474.2 733.3 495.8 737.0 503.0" fill="none" stroke="#0668d0" stroke-width="2.5" stroke-linecap="round" opacity="0.5" filter="url(#b1)"/>
</g>
</svg>
<svg width="800" height="500" viewBox="0 0 800 500" style="position:absolute;left:0;top:0"><defs><filter id="msh" x="-10%" y="-10%" width="130%" height="120%"><feGaussianBlur stdDeviation="1.3"/></filter></defs>
<rect x="10.2" y="17.2" width="158.6" height="383.2" fill="#000" opacity="0.6" filter="url(#msh)"/>
<rect x="8.75" y="15.6" width="158.3" height="383" fill="#c9c9c9"/>
<rect x="9.5" y="16.3" width="156.9" height="381.6" fill="#f1f1f1"/>
<rect x="11.25" y="80.75" width="153.75" height="1" fill="#d2d2d2"/>
<rect x="11.25" y="147.75" width="153.75" height="1" fill="#d2d2d2"/>
<rect x="11.25" y="215.75" width="153.75" height="1" fill="#d2d2d2"/>
<rect x="11.25" y="253.25" width="153.75" height="1" fill="#d2d2d2"/>
<rect x="11.25" y="292.00" width="153.75" height="1" fill="#d2d2d2"/>
<rect x="11.25" y="315.25" width="153.75" height="1" fill="#d2d2d2"/>
<rect x="11.25" y="338.75" width="153.75" height="1" fill="#d2d2d2"/>
<rect x="11.25" y="377.00" width="153.75" height="1" fill="#d2d2d2"/>
<rect x="7" y="150.9" width="160.8" height="20" fill="#fb0d14"/>
<rect x="9.3" y="153.2" width="156.1" height="15.5" fill="#0a72da"/>
</svg>
<span class="t en" style="left:24.25px;top:19.61px;transform:scaleX(0.9467)">All</span>
<span class="t dis" style="left:24.25px;top:34.36px;transform:scaleX(0.9129)">Deselect</span>
<span class="t dis" style="left:24.25px;top:49.11px;transform:scaleX(0.8994)">Reselect</span>
<span class="t dis" style="left:24.25px;top:64.11px;transform:scaleX(0.9147)">Inverse</span>
<span class="t en" style="left:24.25px;top:87.36px;transform:scaleX(0.9169)">All Layers</span>
<span class="t en" style="left:24.25px;top:102.11px;transform:scaleX(0.9101)">Deselect Layers</span>
<span class="t en" style="left:24.25px;top:116.86px;transform:scaleX(0.9216)">Find Layers</span>
<span class="t en" style="left:24.25px;top:131.61px;transform:scaleX(0.9128)">Isolate Layers</span>
<span class="t hl" style="left:24.25px;top:154.86px;transform:scaleX(0.9385)">Color Range...</span>
<span class="t en" style="left:24.25px;top:169.61px;transform:scaleX(0.9288)">Focus Area...</span>
<span class="t en" style="left:24.25px;top:184.11px;transform:scaleX(0.9467)">Subject</span>
<span class="t en" style="left:24.25px;top:198.86px;transform:scaleX(0.8363)">Sky</span>
<span class="t en" style="left:24.25px;top:222.36px;transform:scaleX(0.9308)">Select and Mask...</span>
<span class="t dis" style="left:24.25px;top:237.61px;transform:scaleX(1.0542)">Modify</span>
<span class="t dis" style="left:24.25px;top:260.36px;transform:scaleX(0.9470)">Grow</span>
<span class="t dis" style="left:24.25px;top:275.36px;transform:scaleX(0.9559)">Similar</span>
<span class="t dis" style="left:24.25px;top:298.61px;transform:scaleX(0.9568)">Transform Selection</span>
<span class="t en" style="left:24.25px;top:321.61px;transform:scaleX(0.9755)">Edit in Quick Mask Mode</span>
<span class="t en" style="left:24.25px;top:345.36px;transform:scaleX(0.9395)">Load Selection...</span>
<span class="t dis" style="left:24.25px;top:360.36px;transform:scaleX(0.9117)">Save Selection...</span>
<span class="t dis" style="left:24.25px;top:383.36px;transform:scaleX(0.9470)">New 3D Extrusion</span>
<span class="t en" style="left:125.75px;top:19.61px;transform:scaleX(0.9842)">Ctrl+A</span>
<span class="t dis" style="left:125.75px;top:34.36px;transform:scaleX(0.9655)">Ctrl+D</span>
<span class="t dis" style="left:100.75px;top:49.11px;transform:scaleX(0.9903)">Shift+Ctrl+D</span>
<span class="t dis" style="left:104.50px;top:64.11px;transform:scaleX(0.9993)">Shift+Ctrl+I</span>
<span class="t en" style="left:107.50px;top:87.36px;transform:scaleX(1.0278)">Alt+Ctrl+A</span>
<span class="t en" style="left:84.25px;top:116.86px;transform:scaleX(1.0063)">Alt+Shift+Ctrl+F</span>
<span class="t en" style="left:108.00px;top:222.36px;transform:scaleX(1.0096)">Alt+Ctrl+R</span>
<svg width="800" height="500" viewBox="0 0 800 500" style="position:absolute;left:0;top:0;pointer-events:none">
<g stroke="#fb0d14" stroke-linecap="round" fill="#fb0d14">
<line x1="61.2" y1="40.6" x2="37" y2="20.4" stroke-width="2.8"/>
<path stroke-width="0.8" stroke-linejoin="round" d="M29.6 13.8L34.8 22.8L40.1 18.6Z"/>
<line x1="199.6" y1="194.8" x2="179" y2="174.5" stroke-width="2.5"/>
<path stroke-width="0.8" stroke-linejoin="round" d="M172.1 167.6L177 177L182.2 173Z"/>
</g>
<path d="M119 162.6v12.4l2.7-2.5l2 4.4l1.8-0.8l-2-4.3h3.7z" fill="#ffffff" stroke="#1a1a1a" stroke-width="0.9" stroke-linejoin="round"/>
<path d="M157 240.2l3.1 3l-3.1 3z" fill="#505050"/>
</svg>

</body></html>
